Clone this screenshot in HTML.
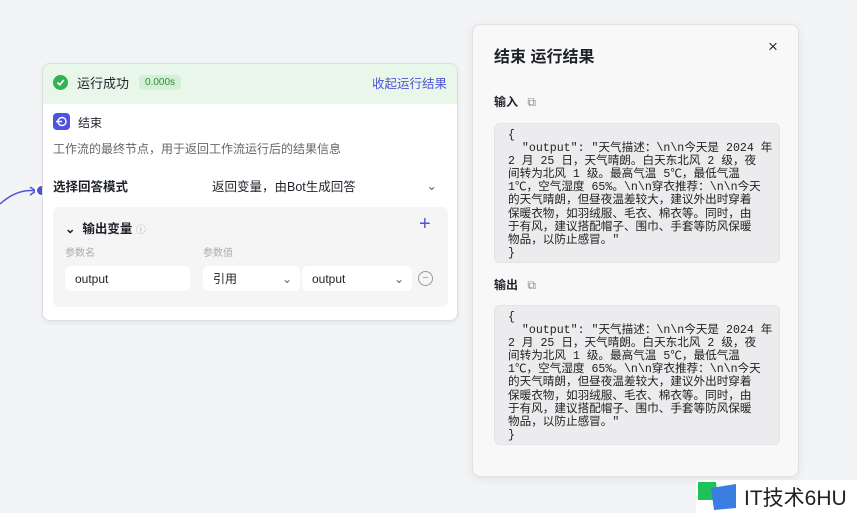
<!DOCTYPE html>
<html><head><meta charset="utf-8"><style>
*{box-sizing:border-box;margin:0;padding:0}
body{width:857px;height:513px;overflow:hidden;background:#f3f4f6;font-family:"Liberation Sans","Noto Sans CJK SC",sans-serif;position:relative;color:#1f2329}
.card{position:absolute;left:42px;top:63px;width:416px;height:258px;background:#fff;border:1px solid #dcdee2;border-radius:8px;box-shadow:0 2px 6px rgba(0,0,0,.06);overflow:hidden}
.hdr{height:40px;background:#e9f6ea;display:flex;align-items:center;padding:0 10px 4px;font-size:13px}
.ok{width:15px;height:15px;border-radius:50%;background:#33b352;display:inline-flex;align-items:center;justify-content:center;margin-right:9px}
.badge{background:#d3efd6;color:#2b8f3f;font-size:10px;border-radius:4px;padding:2px 6px;margin-left:10px}
.abs{position:absolute}
.panel{position:absolute;left:472px;top:24px;width:327px;height:453px;background:#f8f8f9;border:1px solid #e1e2e5;border-radius:8px;box-shadow:0 2px 10px rgba(0,0,0,.08)}
pre{font-family:"Liberation Mono","Noto Sans CJK SC",monospace;font-size:11.6px;line-height:13.1px;color:#222}
.code{position:absolute;left:21px;width:286px;background:#ececee;border:1px solid #e2e3e6;border-radius:6px;padding:5px 0 0 13px}
.sel{position:absolute;background:#fff;border-radius:6px;font-size:12px;display:flex;align-items:center;padding-left:10px}
</style></head><body>
<svg class="abs" style="left:0;top:180px" width="45" height="40"><path d="M0 24 Q18 8 36 11" stroke="#4e55d8" stroke-width="1.5" fill="none"/><path d="M30 7 L36 11 L30 15" stroke="#4e55d8" stroke-width="1.5" fill="none"/></svg>
<div class="abs" style="left:35px;top:184px;width:13px;height:13px;border-radius:50%;background:#4e55d8;border:2px solid #fff"></div>
<div class="card">
 <div class="hdr"><span class="ok"><svg width="9" height="9"><path d="M1.5 4.5 L3.8 6.8 L7.8 2" stroke="#fff" stroke-width="1.6" fill="none"/></svg></span>运行成功<span class="badge">0.000s</span><span style="margin-left:auto;color:#4e55d8;font-size:12.5px">收起运行结果</span></div>
 <div class="abs" style="left:10px;top:49px;width:17px;height:17px;background:#4d53e0;border-radius:4px"><svg width="17" height="17"><circle cx="9" cy="8.5" r="4" stroke="#fff" stroke-width="1.4" fill="none"/><path d="M3 8.5 H9" stroke="#fff" stroke-width="1.4"/></svg></div>
 <div class="abs" style="left:35px;top:50px;font-size:12px">结束</div>
 <div class="abs" style="left:10px;top:76px;font-size:12px;color:#666">工作流的最终节点，用于返回工作流运行后的结果信息</div>
 <div class="abs" style="left:10px;top:112px;font-size:12.5px;font-weight:bold">选择回答模式</div>
 <div class="sel" style="left:159px;top:109px;width:245px;height:25px;font-size:12.5px">返回变量，由Bot生成回答<span style="margin-left:auto;margin-right:10px;color:#666">⌄</span></div>
 <div class="abs" style="left:10px;top:143px;width:395px;height:100px;background:#f5f5f6;border-radius:6px">
  <div class="abs" style="left:12px;top:11px;font-size:12.5px;font-weight:bold">⌄&nbsp; 输出变量 <span style="font-weight:normal;color:#aaa;font-size:10px">ⓘ</span></div>
  <div class="abs" style="left:366px;top:6px;color:#4e55d8;font-size:20px">+</div>
  <div class="abs" style="left:12px;top:37px;font-size:10px;color:#aaa">参数名</div>
  <div class="abs" style="left:150px;top:37px;font-size:10px;color:#aaa">参数值</div>
  <div class="sel" style="left:12px;top:59px;width:125px;height:25px">output</div>
  <div class="sel" style="left:150px;top:59px;width:97px;height:25px">引用<span style="margin-left:auto;margin-right:8px;color:#666">⌄</span></div>
  <div class="sel" style="left:249px;top:59px;width:110px;height:25px">output<span style="margin-left:auto;margin-right:8px;color:#666">⌄</span></div>
  <div class="abs" style="left:365px;top:64px;width:15px;height:15px;border:1px solid #999;border-radius:50%;color:#999;font-size:11px;line-height:12px;text-align:center">−</div>
 </div>
</div>
<div class="panel">
 <div class="abs" style="left:21px;top:18px;font-size:16px;font-weight:bold">结束 运行结果</div>
 <div class="abs" style="left:295px;top:12px;font-size:17px;color:#333">×</div>
 <div class="abs" style="left:21px;top:68px;font-size:12px;font-weight:bold">输入 <span style="color:#888;font-weight:normal;margin-left:6px">⧉</span></div>
 <div class="code" style="top:98px;height:140px"><pre>{
  "output": "天气描述：\n\n今天是 2024 年
2 月 25 日，天气晴朗。白天东北风 2 级，夜
间转为北风 1 级。最高气温 5℃，最低气温
1℃，空气湿度 65%。\n\n穿衣推荐：\n\n今天
的天气晴朗，但昼夜温差较大，建议外出时穿着
保暖衣物，如羽绒服、毛衣、棉衣等。同时，由
于有风，建议搭配帽子、围巾、手套等防风保暖
物品，以防止感冒。"
}</pre></div>
 <div class="abs" style="left:21px;top:251px;font-size:12px;font-weight:bold">输出 <span style="color:#888;font-weight:normal;margin-left:6px">⧉</span></div>
 <div class="code" style="top:280px;height:140px"><pre>{
  "output": "天气描述：\n\n今天是 2024 年
2 月 25 日，天气晴朗。白天东北风 2 级，夜
间转为北风 1 级。最高气温 5℃，最低气温
1℃，空气湿度 65%。\n\n穿衣推荐：\n\n今天
的天气晴朗，但昼夜温差较大，建议外出时穿着
保暖衣物，如羽绒服、毛衣、棉衣等。同时，由
于有风，建议搭配帽子、围巾、手套等防风保暖
物品，以防止感冒。"
}</pre></div>
</div>
<div class="abs" style="left:696px;top:480px;width:161px;height:33px;background:#fff"></div>
<svg class="abs" style="left:696px;top:480px" width="45" height="33"><path d="M2 2 H20 L22 20 H2Z" fill="#1ec15a"/><path d="M15 8 L40 4 V28 L18 30Z" fill="#3b7de0"/></svg>
<div class="abs" style="left:744px;top:482px;font-size:21px;color:#222">IT技术6HU</div>
</body></html>
